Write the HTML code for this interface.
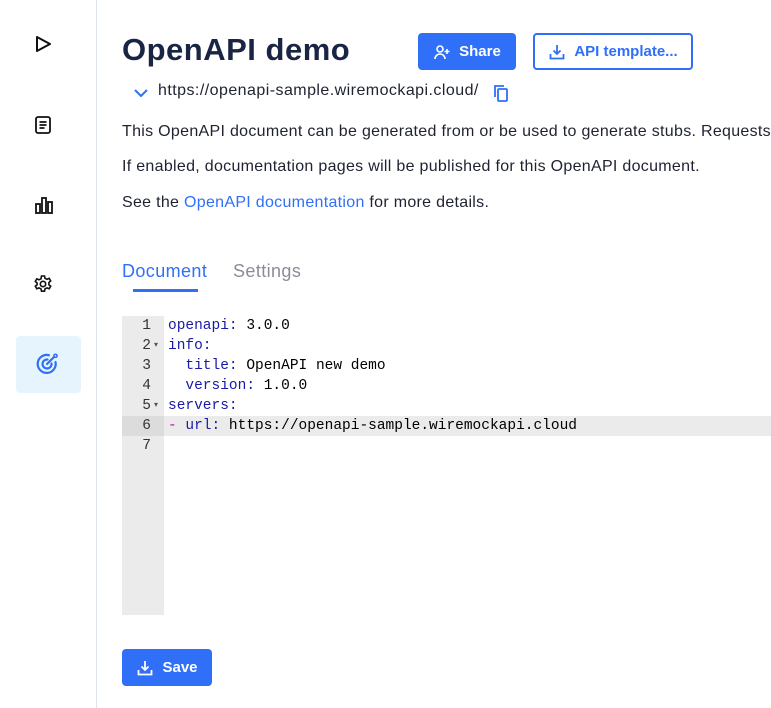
<!DOCTYPE html>
<html><head><style>
*{margin:0;padding:0;box-sizing:border-box}
body{width:771px;height:708px;overflow:hidden;background:#fff;font-family:"Liberation Sans",sans-serif;color:#1f2230;position:relative}
.side{position:absolute;left:0;top:0;width:97px;height:708px;border-right:1px solid #dde4ef}
.ic{position:absolute;left:33px}
.act{position:absolute;left:16px;top:336px;width:65px;height:57px;background:#e6f5fd;border-radius:4px}
h1{position:absolute;left:122px;top:32px;font-size:31px;font-weight:bold;color:#1a2544;letter-spacing:0.5px}
.btn{position:absolute;top:33px;height:37px;border-radius:4px;font-weight:bold;font-size:15px;display:flex;align-items:center;justify-content:center;gap:8px}
.share{left:418px;width:98px;background:#306ff7;color:#fff}
.tpl{left:533px;width:160px;border:2px solid #306ff7;color:#306ff7}
.url{position:absolute;left:158px;top:82px;font-size:16px;letter-spacing:0.45px}
p{position:absolute;left:122px;font-size:16px;letter-spacing:0.3px;white-space:nowrap}
a{color:#306ff7;text-decoration:none}
.tab{position:absolute;top:261px;font-size:18px;letter-spacing:0.4px}
.ed{position:absolute;left:122px;top:316px;width:649px;height:299px;font-family:"Liberation Mono",monospace;font-size:14.5px}
.gut{position:absolute;left:0;top:0;width:42px;height:299px;background:#ebebeb}
.ln{position:absolute;left:0;height:20px;line-height:20px;width:771px}
.n{position:absolute;left:0;width:29px;text-align:right;color:#333}
.c{position:absolute;left:46px;white-space:pre;color:#000}
.k{color:#1a1aa6}
.save{position:absolute;left:122px;top:649px;width:90px;height:37px;background:#306ff7;color:#fff;border-radius:4px;font-weight:bold;font-size:15px;display:flex;align-items:center;justify-content:center;gap:8px}
</style></head><body>
<div class="side">
<svg class="ic" style="top:34px" width="20" height="20" viewBox="0 0 20 20" fill="none" stroke="#111" stroke-width="2" stroke-linejoin="round"><path d="M4 3 L17 10 L4 17 Z"/></svg>
<svg class="ic" style="top:115px" width="20" height="20" viewBox="0 0 20 20" fill="none" stroke="#111" stroke-width="1.8"><rect x="3" y="2" width="14" height="16" rx="2"/><path d="M6.5 7h7M6.5 10h7M6.5 13h5"/></svg>
<svg class="ic" style="top:195px" width="22" height="20" viewBox="0 0 22 20" fill="none" stroke="#111" stroke-width="1.8"><rect x="3" y="9" width="4" height="9"/><rect x="9" y="3" width="4" height="15"/><rect x="15" y="7" width="4" height="11"/></svg>
<svg class="ic" style="top:274px" width="20" height="20" viewBox="0 0 20 20" fill="none" stroke="#111" stroke-width="1.6"><circle cx="10" cy="10" r="2.7"/><path d="M8.5 2h3l.5 2.3 2 1 2.2-.9 1.5 2.6-1.8 1.5v2.2l1.8 1.5-1.5 2.6-2.2-.9-2 1-.5 2.3h-3l-.5-2.3-2-1-2.2.9-1.5-2.6 1.8-1.5V9L2.3 7.5 3.8 4.9l2.2.9 2-1z"/></svg>
<div class="act"></div>
<svg class="ic" style="top:352px;left:36px" width="24" height="24" viewBox="0 0 24 24" fill="none" stroke="#306ff7" stroke-width="2.2" stroke-linecap="round"><path d="M19.5 10A9 9 0 1 1 13 3.2"/><path d="M15.5 11.5A4.5 4.5 0 1 1 11.5 7.5"/><path d="M11 12L18 5"/><circle cx="19.5" cy="3.8" r="1.6" stroke-width="1.5"/></svg>
</div>
<h1>OpenAPI demo</h1>
<div class="btn share"><svg width="18" height="18" viewBox="0 0 18 18" fill="none" stroke="#fff" stroke-width="1.6"><circle cx="7" cy="6" r="3"/><path d="M2 16c0-3 2.5-5 5-5s5 2 5 5M14 6v5M11.5 8.5h5"/></svg>Share</div>
<div class="btn tpl"><svg width="18" height="18" viewBox="0 0 18 18" fill="none" stroke="#306ff7" stroke-width="1.8"><path d="M9 2v9M5.5 7.5L9 11l3.5-3.5M2.5 11v4.5h13V11"/></svg>API template...</div>
<svg style="position:absolute;left:133px;top:88px" width="16" height="10" viewBox="0 0 16 10" fill="none" stroke="#306ff7" stroke-width="2"><path d="M2 2l6 6 6-6"/></svg>
<div class="url">https://openapi-sample.wiremockapi.cloud/</div>
<svg style="position:absolute;left:492px;top:83px" width="18" height="20" viewBox="0 0 18 20" fill="none" stroke="#306ff7" stroke-width="1.8"><path d="M3 14V3h9"/><rect x="6" y="6" width="9" height="12" rx="1"/></svg>
<p style="top:123px">This OpenAPI document can be generated from or be used to generate stubs. Requests</p>
<p style="top:158px">If enabled, documentation pages will be published for this OpenAPI document.</p>
<p style="top:194px">See the <a>OpenAPI documentation</a> for more details.</p>
<div class="tab" style="left:122px;color:#306ff7">Document</div>
<div style="position:absolute;left:133px;top:289px;width:65px;height:3px;background:#306ff7"></div>
<div class="tab" style="left:233px;color:#8a8d99">Settings</div>
<div class="ed">
<div class="gut"></div>
<div class="ln" style="top:100px;background:#ebebeb"><div style="position:absolute;left:0;width:42px;height:20px;background:#dcdcdc"></div></div>
<div class="ln" style="top:0"><span class="n">1</span><span class="c"><span class="k">openapi:</span> 3.0.0</span></div>
<div class="ln" style="top:20px"><span class="n">2</span><span class="c"><span class="k">info:</span></span></div>
<div class="ln" style="top:40px"><span class="n">3</span><span class="c">  <span class="k">title:</span> OpenAPI new demo</span></div>
<div class="ln" style="top:60px"><span class="n">4</span><span class="c">  <span class="k">version:</span> 1.0.0</span></div>
<div class="ln" style="top:80px"><span class="n">5</span><span class="c"><span class="k">servers:</span></span></div>
<div class="ln" style="top:100px"><span class="n">6</span><span class="c"><span style="color:#c0128a">-</span> <span class="k">url:</span> https://openapi-sample.wiremockapi.cloud</span></div>
<div class="ln" style="top:120px"><span class="n">7</span></div>
<div style="position:absolute;left:32px;top:24px;font-size:8px;color:#555">▾</div>
<div style="position:absolute;left:32px;top:84px;font-size:8px;color:#555">▾</div>
</div>
<div class="save"><svg width="18" height="18" viewBox="0 0 18 18" fill="none" stroke="#fff" stroke-width="1.8"><path d="M9 2v9M5.5 7.5L9 11l3.5-3.5M2.5 11v4.5h13V11"/></svg>Save</div>
</body></html>
